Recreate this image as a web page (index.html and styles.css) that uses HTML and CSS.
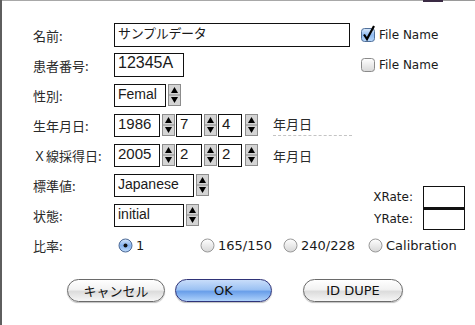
FILE: index.html
```html
<!DOCTYPE html>
<html lang="ja">
<head>
    <meta charset="UTF-8">
    <title>患者情報</title>
    <link rel="stylesheet" href="styles.css">
</head>
<body>
    <div class="window">
        <div class="topline">
            <span class="seg grey"></span>
            <span class="seg dark"></span>
            <span class="seg grey end"></span>
        </div>

        <div class="form">
            <div class="label">名前:</div>
            <div class="field"><div class="box name">サンプルデータ</div></div>
            <div class="side">
                <svg class="check" width="16" height="18" viewBox="0 0 16 18">
                    <defs>
                        <linearGradient id="aqua" x1="0" y1="0" x2="0" y2="1">
                            <stop offset="0" stop-color="#dcebfb"/>
                            <stop offset="0.5" stop-color="#8fbaf0"/>
                            <stop offset="1" stop-color="#b9d8fb"/>
                        </linearGradient>
                    </defs>
                    <rect x="1.5" y="3.5" width="13" height="13" rx="3" fill="url(#aqua)" stroke="#50709a"/>
                    <path d="M4 9.5 L7 14 L14 1" fill="none" stroke="#000" stroke-width="2.2"/>
                </svg>
                File Name
            </div>

            <div class="label">患者番号:</div>
            <div class="field"><div class="box pid">12345A</div></div>
            <div class="side">
                <svg class="check" width="16" height="18" viewBox="0 0 16 18">
                    <defs>
                        <linearGradient id="plain" x1="0" y1="0" x2="0" y2="1">
                            <stop offset="0" stop-color="#ffffff"/>
                            <stop offset="1" stop-color="#d8d8d8"/>
                        </linearGradient>
                    </defs>
                    <rect x="1.5" y="3.5" width="13" height="13" rx="3" fill="url(#plain)" stroke="#8a8a8a"/>
                </svg>
                File Name
            </div>

            <div class="label">性別:</div>
            <div class="field">
                <div class="box sel sex">Femal</div>
                <svg class="spin" width="13" height="22" viewBox="0 0 13 22"><rect x="0.5" y="0.5" width="12" height="21" fill="#d4d4d4" stroke="#8c8c8c"/><line x1="0" y1="11" x2="13" y2="11" stroke="#8c8c8c"/><path d="M6.5 3 L10 9 L3 9 Z"/><path d="M6.5 19 L10 13 L3 13 Z"/></svg>
            </div>

            <div class="label">生年月日:</div>
            <div class="field">
                <div class="box num yr">1986</div>
                <svg class="spin" width="13" height="22" viewBox="0 0 13 22"><rect x="0.5" y="0.5" width="12" height="21" fill="#d4d4d4" stroke="#8c8c8c"/><line x1="0" y1="11" x2="13" y2="11" stroke="#8c8c8c"/><path d="M6.5 3 L10 9 L3 9 Z"/><path d="M6.5 19 L10 13 L3 13 Z"/></svg>
                <div class="box num mo">7</div>
                <svg class="spin" width="13" height="22" viewBox="0 0 13 22"><rect x="0.5" y="0.5" width="12" height="21" fill="#d4d4d4" stroke="#8c8c8c"/><line x1="0" y1="11" x2="13" y2="11" stroke="#8c8c8c"/><path d="M6.5 3 L10 9 L3 9 Z"/><path d="M6.5 19 L10 13 L3 13 Z"/></svg>
                <div class="box num dy">4</div>
                <svg class="spin last" width="13" height="22" viewBox="0 0 13 22"><rect x="0.5" y="0.5" width="12" height="21" fill="#d4d4d4" stroke="#8c8c8c"/><line x1="0" y1="11" x2="13" y2="11" stroke="#8c8c8c"/><path d="M6.5 3 L10 9 L3 9 Z"/><path d="M6.5 19 L10 13 L3 13 Z"/></svg>
                <span class="ymd dotted">年月日</span>
            </div>

            <div class="label">Ｘ線採得日:</div>
            <div class="field">
                <div class="box num yr">2005</div>
                <svg class="spin" width="13" height="22" viewBox="0 0 13 22"><rect x="0.5" y="0.5" width="12" height="21" fill="#d4d4d4" stroke="#8c8c8c"/><line x1="0" y1="11" x2="13" y2="11" stroke="#8c8c8c"/><path d="M6.5 3 L10 9 L3 9 Z"/><path d="M6.5 19 L10 13 L3 13 Z"/></svg>
                <div class="box num mo">2</div>
                <svg class="spin" width="13" height="22" viewBox="0 0 13 22"><rect x="0.5" y="0.5" width="12" height="21" fill="#d4d4d4" stroke="#8c8c8c"/><line x1="0" y1="11" x2="13" y2="11" stroke="#8c8c8c"/><path d="M6.5 3 L10 9 L3 9 Z"/><path d="M6.5 19 L10 13 L3 13 Z"/></svg>
                <div class="box num dy">2</div>
                <svg class="spin last" width="13" height="22" viewBox="0 0 13 22"><rect x="0.5" y="0.5" width="12" height="21" fill="#d4d4d4" stroke="#8c8c8c"/><line x1="0" y1="11" x2="13" y2="11" stroke="#8c8c8c"/><path d="M6.5 3 L10 9 L3 9 Z"/><path d="M6.5 19 L10 13 L3 13 Z"/></svg>
                <span class="ymd">年月日</span>
            </div>

            <div class="label">標準値:</div>
            <div class="field">
                <div class="box sel std">Japanese</div>
                <svg class="spin wide" width="13" height="22" viewBox="0 0 13 22"><rect x="0.5" y="0.5" width="12" height="21" fill="#d4d4d4" stroke="#8c8c8c"/><line x1="0" y1="11" x2="13" y2="11" stroke="#8c8c8c"/><path d="M6.5 3 L10 9 L3 9 Z"/><path d="M6.5 19 L10 13 L3 13 Z"/></svg>
            </div>

            <div class="rates">
                <div class="rate"><span class="rate-label">XRate:</span><div class="rate-box"></div></div>
                <div class="rate"><span class="rate-label">YRate:</span><div class="rate-box"></div></div>
            </div>

            <div class="label">状態:</div>
            <div class="field">
                <div class="box sel state">initial</div>
                <svg class="spin wide" width="13" height="22" viewBox="0 0 13 22"><rect x="0.5" y="0.5" width="12" height="21" fill="#d4d4d4" stroke="#8c8c8c"/><line x1="0" y1="11" x2="13" y2="11" stroke="#8c8c8c"/><path d="M6.5 3 L10 9 L3 9 Z"/><path d="M6.5 19 L10 13 L3 13 Z"/></svg>
            </div>

            <div class="label">比率:</div>
            <div class="radios">
                <label class="radio r1">
                    <svg width="15" height="15" viewBox="0 0 15 15">
                        <defs>
                            <linearGradient id="rblue" x1="0" y1="0" x2="0" y2="1">
                                <stop offset="0" stop-color="#d8e8fb"/>
                                <stop offset="0.5" stop-color="#85b2ee"/>
                                <stop offset="1" stop-color="#c0dcfb"/>
                            </linearGradient>
                            <linearGradient id="rgrey" x1="0" y1="0" x2="0" y2="1">
                                <stop offset="0" stop-color="#ffffff"/>
                                <stop offset="1" stop-color="#d6d6d6"/>
                            </linearGradient>
                        </defs>
                        <circle cx="7.5" cy="7.5" r="6.5" fill="url(#rblue)" stroke="#4d6a96"/>
                        <circle cx="7.5" cy="7.5" r="2" fill="#111"/>
                    </svg>
                    1
                </label>
                <label class="radio r2">
                    <svg width="15" height="15" viewBox="0 0 15 15"><circle cx="7.5" cy="7.5" r="6.5" fill="url(#rgrey)" stroke="#999"/></svg>
                    165/150
                </label>
                <label class="radio r3">
                    <svg width="15" height="15" viewBox="0 0 15 15"><circle cx="7.5" cy="7.5" r="6.5" fill="url(#rgrey)" stroke="#999"/></svg>
                    240/228
                </label>
                <label class="radio">
                    <svg width="15" height="15" viewBox="0 0 15 15"><circle cx="7.5" cy="7.5" r="6.5" fill="url(#rgrey)" stroke="#999"/></svg>
                    Calibration
                </label>
            </div>
        </div>

        <div class="buttons">
            <button class="btn cancel">キャンセル</button>
            <button class="btn ok">OK</button>
            <button class="btn dupe">ID DUPE</button>
        </div>
    </div>
</body>
</html>
```

FILE: styles.css
```css
body {
    margin: 0;
    background: #fff;
}

.window {
    width: 475px;
    height: 325px;
    box-sizing: border-box;
    border-left: 2px solid #5e5e5e;
    background: #fff;
    color: #1a1a1a;
}

.topline {
    display: flex;
    height: 2px;
}

.seg {
    display: block;
    height: 1px;
    background: #a8a8a8;
}

.seg.grey { width: 421px; }
.seg.dark { width: 20px; height: 2px; background: #3a2a44; }
.seg.end { flex: 1; background: #9a9a9a; }

.form {
    display: grid;
    grid-template-columns: 81px 244px 1fr;
    grid-auto-rows: 24px;
    row-gap: 6px;
    padding: 21px 0 0 31px;
}

.label {
    grid-column: 1;
    display: flex;
    align-items: center;
    font-family: "Noto Sans CJK JP", sans-serif;
    font-size: 13px;
    color: #2a2a2a;
    padding-top: 1px;
}

.field {
    grid-column: 2;
    display: flex;
    align-items: center;
}

.side {
    grid-column: 3;
    display: flex;
    align-items: center;
    padding-left: 2px;
    font-family: "DejaVu Sans", sans-serif;
    font-size: 12px;
}

.check {
    margin: -3px 3px 0 0;
}

.box {
    box-sizing: border-box;
    height: 24px;
    border: 1px solid #111;
    background: #fff;
    padding: 0 3px;
    white-space: nowrap;
    overflow: hidden;
    font-family: "Liberation Sans", "Noto Sans CJK JP", sans-serif;
}

.name {
    width: 236px;
    font-family: "Noto Sans CJK JP", sans-serif;
    font-size: 13px;
    line-height: 17px;
    letter-spacing: -0.3px;
}

.pid {
    width: 70px;
    font-size: 16px;
    line-height: 17px;
}

.num {
    height: 23px;
    font-size: 15px;
    line-height: 18px;
}

.yr { width: 46px; }
.mo { width: 26px; margin-left: 1px; }
.dy { width: 24px; margin-left: 1px; }

.sel {
    height: 23px;
    font-size: 14px;
    line-height: 19px;
}

.sex { width: 52px; }
.std { width: 80px; }
.state { width: 70px; }

.spin {
    margin-left: 2px;
    flex: none;
}

.spin.last { margin-left: 3px; }

.ymd {
    margin-left: 15px;
    font-family: "Noto Sans CJK JP", sans-serif;
    font-size: 13px;
    color: #2a2a2a;
    width: 79px;
    padding-top: 1px;
}

.dotted {
    border-bottom: 1px dashed #c4c4c4;
    padding: 0 0 2px;
    margin-top: 0;
}

.rates {
    grid-column: 3;
    grid-row: 6 / span 2;
    align-self: end;
    margin-bottom: -3px;
    font-family: "DejaVu Sans", sans-serif;
    font-size: 12px;
}

.rate {
    display: flex;
    align-items: center;
}

.rate-label {
    width: 55px;
    text-align: right;
    margin-right: 10px;
}

.rate-box {
    width: 42px;
    height: 22px;
    box-sizing: border-box;
    border: 1px solid #111;
}

.rate + .rate .rate-box {
    height: 22px;
    border-top-width: 2px;
}

.radios {
    grid-column: 2 / 4;
    display: flex;
    align-items: center;
    padding-left: 4px;
    font-family: "DejaVu Sans", sans-serif;
    font-size: 13px;
}

.radio {
    display: flex;
    align-items: center;
    gap: 3px;
}

.r1 { width: 82px; }
.r2 { width: 83px; }
.r3 { width: 85px; }

.buttons {
    display: flex;
    padding: 22px 0 0 65px;
}

.btn {
    height: 23px;
    border: 1px solid #6a6a6a;
    border-radius: 12px;
    background: linear-gradient(#ffffff, #f2f2f2 45%, #dcdcdc 55%, #f6f6f6);
    box-shadow: 0 1px 1px rgba(0, 0, 0, 0.25);
    font-family: "DejaVu Sans", "Noto Sans CJK JP", sans-serif;
    font-size: 13px;
    color: #111;
    padding: 0;
}

.cancel {
    width: 98px;
    font-family: "Noto Sans CJK JP", sans-serif;
}

.ok {
    width: 97px;
    margin-left: 10px;
    border-color: #2f3378;
    background: linear-gradient(#c8ddfa, #9cc2f3 45%, #6a9fea 55%, #aed2fb);
}

.dupe {
    width: 100px;
    margin-left: 31px;
}
```
